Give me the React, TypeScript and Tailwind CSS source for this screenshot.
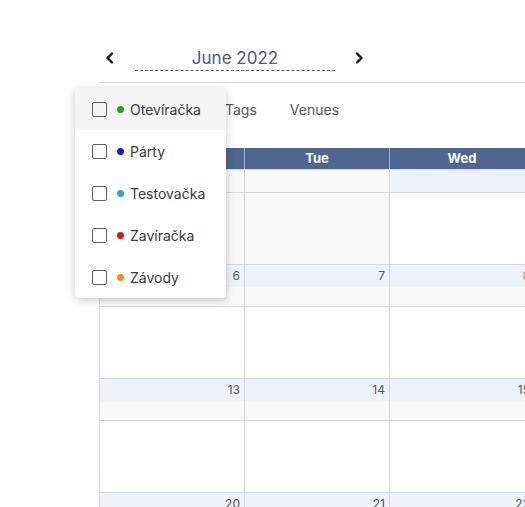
const categories = [
  { name: 'Otevíračka', color: 'bg-[#2f9e22]' },
  { name: 'Párty', color: 'bg-[#0b1fd8]' },
  { name: 'Testovačka', color: 'bg-[#25b0b3]' },
  { name: 'Zavíračka', color: 'bg-[#e3101c]' },
  { name: 'Závody', color: 'bg-[#f58b1f]' },
];

const days = ['Mon', 'Tue', 'Wed', 'Thu', 'Fri', 'Sat', 'Sun'];

const weeks = [
  [30, 31, 1, 2, 3, 4, 5],
  [6, 7, 8, 9, 10, 11, 12],
  [13, 14, 15, 16, 17, 18, 19],
  [20, 21, 22, 23, 24, 25, 26],
];

function Chevron({ dir }: { dir: 'left' | 'right' }) {
  return (
    <svg className="w-[10px] h-[12px]" viewBox="0 0 10 12" fill="none">
      <path
        d={dir === 'left' ? 'M7 1.5L2.5 6 7 10.5' : 'M3 1.5L7.5 6 3 10.5'}
        stroke="#111"
        strokeWidth={2.4}
        strokeLinecap="round"
        strokeLinejoin="round"
      />
    </svg>
  );
}

function Week({ dates, first }: { dates: number[]; first: boolean }) {
  return (
    <div className="grid grid-cols-[repeat(7,145px)] border-t border-[#d6d6d6]">
      {dates.map((d, i) => {
        const other = first && d > 20;
        return (
          <div
            key={i}
            className={`flex flex-col border-l border-[#d6d6d6] ${other ? 'bg-[#f8f8f8]' : ''}`}
          >
            <div
              className={`h-[22px] flex items-center justify-end pr-[4px] text-[12px] ${
                other ? 'bg-[#f8f8f8]' : 'bg-[#eef2f9]'
              } ${d === 8 ? 'text-[#c98f2a]' : 'text-[#555]'}`}
            >
              {other ? '' : d}
            </div>
            {!first && <div className="h-[19px] bg-[#f8f8f8]" />}
            <div className="h-[72px] border-t border-[#d6d6d6]" />
          </div>
        );
      })}
    </div>
  );
}

export default function App() {
  return (
    <div className="relative w-[525px] h-[507px] overflow-hidden bg-white font-['Inter',sans-serif]">
      <div className="ml-[99px] w-[1015px]">
        {/* Month nav */}
        <div className="h-[83px] pt-[44px] border-b border-[#e2e2e2]">
          <div className="flex items-center h-[28px]">
            <button className="ml-[6px] flex items-center">
              <Chevron dir="left" />
            </button>
            <div className="ml-[20px] w-[200px] text-center text-[17px] leading-[24px] text-[#4b5a76] border-b border-dashed border-[#555]">
              June 2022
            </div>
            <button className="ml-[19px] flex items-center">
              <Chevron dir="right" />
            </button>
          </div>
        </div>

        {/* Tabs (first tab sits under the open dropdown) */}
        <div className="h-[65px] flex items-start pt-[16px] text-[14px] text-[#555]">
          <span className="ml-[126px]">Tags</span>
          <span className="ml-[33px]">Venues</span>
        </div>

        {/* Calendar */}
        <div className="border-r border-[#d6d6d6]">
          <div className="grid grid-cols-[repeat(7,145px)] h-[21px] bg-[#4e6690]">
            {days.map((d, i) => (
              <div
                key={d}
                className={`flex items-center justify-center text-[13px] font-bold text-white ${
                  i > 0 ? 'border-l border-[#a3b2ca]' : ''
                }`}
              >
                {d}
              </div>
            ))}
          </div>
          {weeks.map((w, i) => (
            <Week key={i} dates={w} first={i === 0} />
          ))}
        </div>
      </div>

      {/* Categories dropdown */}
      <div className="absolute left-[75px] top-[88px] w-[151px] bg-white rounded-[4px] shadow-[0_2px_8px_rgba(0,0,0,0.22)] overflow-hidden">
        {categories.map((c, i) => (
          <div
            key={c.name}
            className={`h-[42px] flex items-center pl-[17px] ${i === 0 ? 'bg-[#f5f5f5]' : ''}`}
          >
            <span className="w-[15px] h-[15px] border-[1.5px] border-[#5f5f5f] rounded-[2px]" />
            <span className={`ml-[10px] w-[7px] h-[7px] rounded-full ${c.color}`} />
            <span className="ml-[6px] text-[14px] text-[#3a3a3a]">{c.name}</span>
          </div>
        ))}
      </div>
    </div>
  );
}
